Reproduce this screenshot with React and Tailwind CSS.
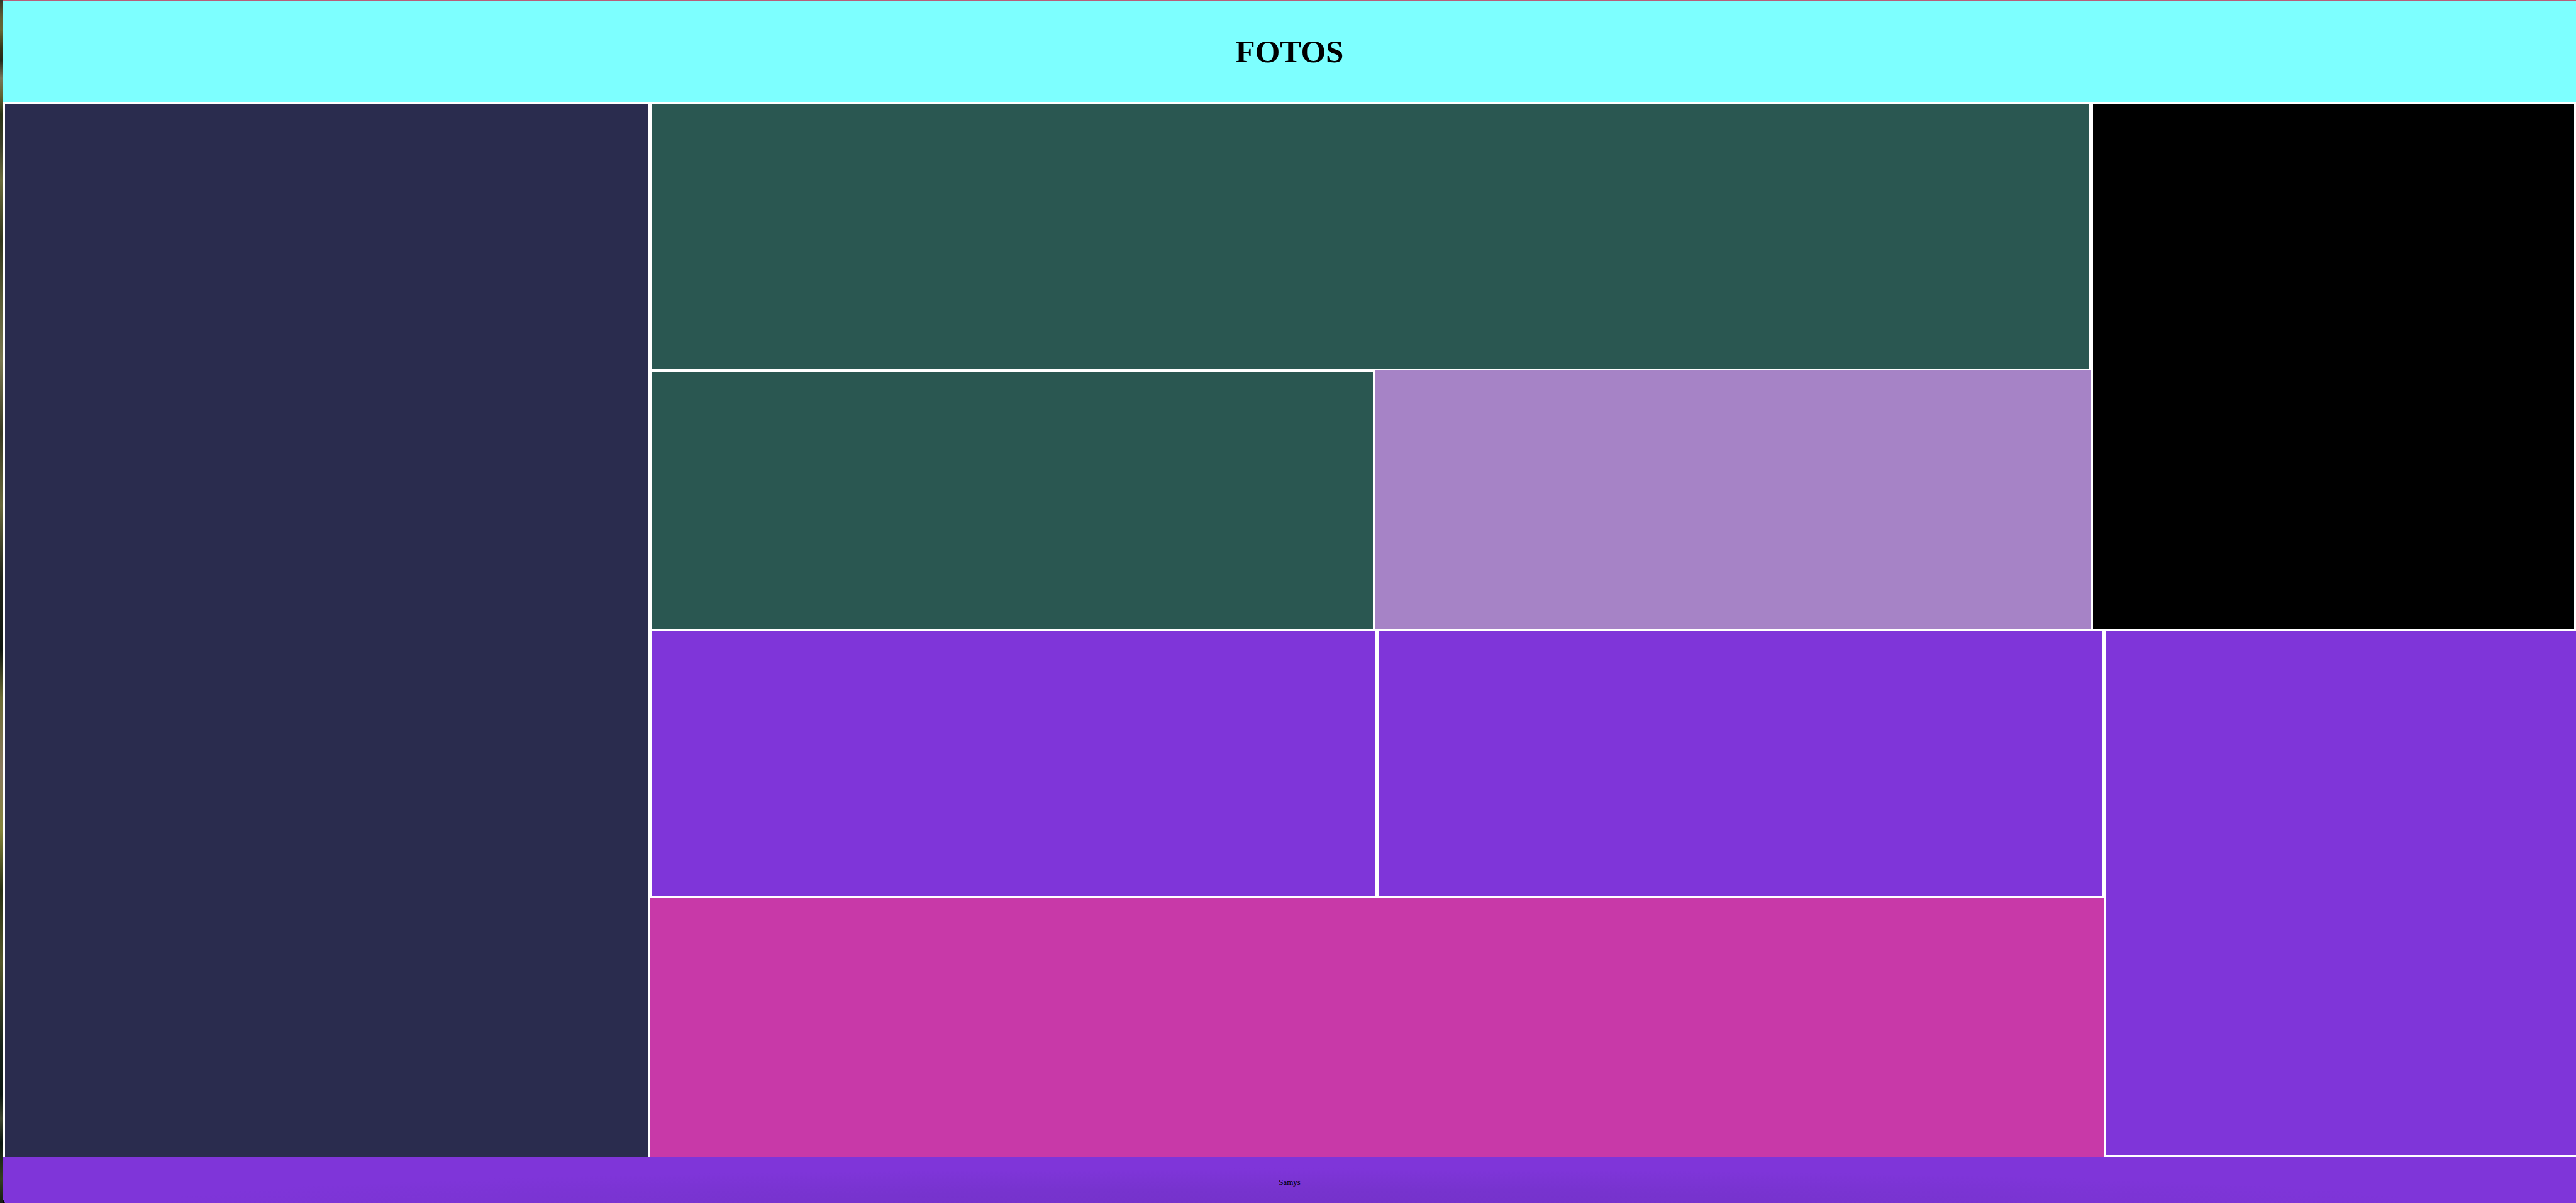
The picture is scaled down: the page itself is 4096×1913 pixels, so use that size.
export default function App() {
  return (
    <div className="flex h-screen w-full bg-black font-['Liberation_Serif',serif] text-black">
      <div
        aria-hidden="true"
        className="w-1 shrink-0 bg-[linear-gradient(to_bottom,#39382a_0%,#5f6034_1.5%,#656735_2.5%,#34361a_4%,#24281a_5%,#77775a_6.5%,#60602f_8%,#2b3415_9.5%,#3c3f28_12%,#6b6c3c_15%,#33371c_20%,#5b5d36_25%,#7a7850_30%,#3a3b22_36%,#69693c_42%,#22261a_48%,#101710_54%,#6d6d35_58%,#8a7a5e_64%,#85853a_69%,#2a3214_74%,#55582a_80%,#18241a_87%,#0c1812_91%,#3e4630_93%,#0b1710_95%,#33401f_98%,#141d12_100%)]"
      />
      <div className="ml-px flex min-w-0 grow flex-col overflow-hidden rounded-bl-[4px_10px] bg-white">
        <header className="flex h-[162px] shrink-0 items-center justify-center border-t-2 border-[#b8607a] bg-[#7dffff]">
          <h1 className="text-[51px] leading-[60px] font-bold">FOTOS</h1>
        </header>

        <main className="grid min-h-0 grow grid-cols-[1029fr_3062fr]">
          <section className="border-x-3 border-t-3 border-white bg-[#2a2c4e]" />

          <div className="grid min-h-0 grid-rows-2">
            <div className="grid min-h-0 grid-cols-[2291fr_771fr]">
              <div className="grid min-h-0 grid-rows-[427fr_412fr]">
                <section className="border-3 border-white bg-[#2a5751]" />
                <div className="grid grid-cols-[1149fr_1142fr]">
                  <section className="border-3 border-r-0 border-b-0 border-white bg-[#2a5751]" />
                  <section className="border-l-3 border-white bg-[#a683c6]" />
                </div>
              </div>
              <section className="border-3 border-b-0 border-white bg-black" />
            </div>

            <div className="grid min-h-0 grid-cols-[2311fr_751fr]">
              <div className="grid min-h-0 grid-rows-[427fr_412fr]">
                <div className="grid grid-cols-2">
                  <section className="border-3 border-white bg-[#7f35d9]" />
                  <section className="border-3 border-white bg-[#7f35d9]" />
                </div>
                <section className="bg-[#c839a8]" />
              </div>
              <section className="border-3 border-r-0 border-white bg-[#7f35d9]" />
            </div>
          </div>
        </main>

        <footer className="flex h-[73px] shrink-0 justify-center bg-[#7f35d9] bg-[radial-gradient(ellipse_44%_75%_at_50%_100%,#7532cb_0%,#7733ce_40%,#7f35d9_100%)] pt-8">
          <p className="text-[13px] leading-4">Samys</p>
        </footer>
      </div>
    </div>
  );
}
